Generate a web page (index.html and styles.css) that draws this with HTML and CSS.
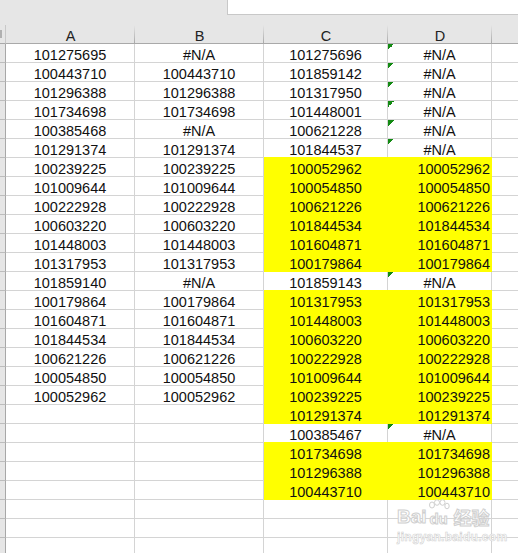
FILE: index.html
```html
<!DOCTYPE html>
<html>
<head>
<meta charset="utf-8">
<link rel="stylesheet" href="styles.css">
</head>
<body>
<div class="topbar"><div class="namebox"></div></div>
<div class="band"></div>
<div class="sheet">
  <div class="row head"><div class="c s"><span class="corner"></span></div><div class="c">A</div><div class="c">B</div><div class="c">C</div><div class="c">D</div><div class="c e"></div></div>
  <div class="row"><div class="c s"></div><div class="c">101275695</div><div class="c">#N/A</div><div class="c">101275696</div><div class="c t">#N/A</div><div class="c e"></div></div>
  <div class="row"><div class="c s"></div><div class="c">100443710</div><div class="c">100443710</div><div class="c">101859142</div><div class="c t">#N/A</div><div class="c e"></div></div>
  <div class="row"><div class="c s"></div><div class="c">101296388</div><div class="c">101296388</div><div class="c">101317950</div><div class="c t">#N/A</div><div class="c e"></div></div>
  <div class="row"><div class="c s"></div><div class="c">101734698</div><div class="c">101734698</div><div class="c">101448001</div><div class="c t">#N/A</div><div class="c e"></div></div>
  <div class="row"><div class="c s"></div><div class="c">100385468</div><div class="c">#N/A</div><div class="c">100621228</div><div class="c t">#N/A</div><div class="c e"></div></div>
  <div class="row"><div class="c s"></div><div class="c">101291374</div><div class="c">101291374</div><div class="c">101844537</div><div class="c t">#N/A</div><div class="c e"></div></div>
  <div class="row"><div class="c s"></div><div class="c">100239225</div><div class="c">100239225</div><div class="c y">100052962</div><div class="c y n">100052962</div><div class="c e"></div></div>
  <div class="row"><div class="c s"></div><div class="c">101009644</div><div class="c">101009644</div><div class="c y">100054850</div><div class="c y n">100054850</div><div class="c e"></div></div>
  <div class="row"><div class="c s"></div><div class="c">100222928</div><div class="c">100222928</div><div class="c y">100621226</div><div class="c y n">100621226</div><div class="c e"></div></div>
  <div class="row"><div class="c s"></div><div class="c">100603220</div><div class="c">100603220</div><div class="c y">101844534</div><div class="c y n">101844534</div><div class="c e"></div></div>
  <div class="row"><div class="c s"></div><div class="c">101448003</div><div class="c">101448003</div><div class="c y">101604871</div><div class="c y n">101604871</div><div class="c e"></div></div>
  <div class="row"><div class="c s"></div><div class="c">101317953</div><div class="c">101317953</div><div class="c y">100179864</div><div class="c y n">100179864</div><div class="c e"></div></div>
  <div class="row"><div class="c s"></div><div class="c">101859140</div><div class="c">#N/A</div><div class="c">101859143</div><div class="c t">#N/A</div><div class="c e"></div></div>
  <div class="row"><div class="c s"></div><div class="c">100179864</div><div class="c">100179864</div><div class="c y">101317953</div><div class="c y n">101317953</div><div class="c e"></div></div>
  <div class="row"><div class="c s"></div><div class="c">101604871</div><div class="c">101604871</div><div class="c y">101448003</div><div class="c y n">101448003</div><div class="c e"></div></div>
  <div class="row"><div class="c s"></div><div class="c">101844534</div><div class="c">101844534</div><div class="c y">100603220</div><div class="c y n">100603220</div><div class="c e"></div></div>
  <div class="row"><div class="c s"></div><div class="c">100621226</div><div class="c">100621226</div><div class="c y">100222928</div><div class="c y n">100222928</div><div class="c e"></div></div>
  <div class="row"><div class="c s"></div><div class="c">100054850</div><div class="c">100054850</div><div class="c y">101009644</div><div class="c y n">101009644</div><div class="c e"></div></div>
  <div class="row"><div class="c s"></div><div class="c">100052962</div><div class="c">100052962</div><div class="c y">100239225</div><div class="c y n">100239225</div><div class="c e"></div></div>
  <div class="row"><div class="c s"></div><div class="c"></div><div class="c"></div><div class="c y">101291374</div><div class="c y n">101291374</div><div class="c e"></div></div>
  <div class="row"><div class="c s"></div><div class="c"></div><div class="c"></div><div class="c">100385467</div><div class="c t">#N/A</div><div class="c e"></div></div>
  <div class="row"><div class="c s"></div><div class="c"></div><div class="c"></div><div class="c y">101734698</div><div class="c y n">101734698</div><div class="c e"></div></div>
  <div class="row"><div class="c s"></div><div class="c"></div><div class="c"></div><div class="c y">101296388</div><div class="c y n">101296388</div><div class="c e"></div></div>
  <div class="row"><div class="c s"></div><div class="c"></div><div class="c"></div><div class="c y">100443710</div><div class="c y n">100443710</div><div class="c e"></div></div>
  <div class="row"><div class="c s"></div><div class="c"></div><div class="c"></div><div class="c"></div><div class="c"></div><div class="c e"></div></div>
  <div class="row"><div class="c s"></div><div class="c"></div><div class="c"></div><div class="c"></div><div class="c"></div><div class="c e"></div></div>
  <div class="row"><div class="c s"></div><div class="c"></div><div class="c"></div><div class="c"></div><div class="c"></div><div class="c e"></div></div>
</div>
<div class="watermark">
  <div class="wm-logo">
    <span>Bai</span>
    <span class="paw">
      <svg width="22" height="12" viewBox="0 0 22 12">
        <g fill="#fff" stroke="#cfcfcf" stroke-width="1">
          <ellipse cx="4" cy="6" rx="2.5" ry="3"/>
          <ellipse cx="9" cy="3.5" rx="2.5" ry="2.8"/>
          <ellipse cx="14.5" cy="3.5" rx="2.5" ry="2.8"/>
          <ellipse cx="19" cy="7" rx="2.2" ry="2.8"/>
        </g>
      </svg>
      <span class="du">du</span>
    </span>
    <span class="jy">经验</span>
  </div>
  <div class="wm-url">jingyan.baidu.com</div>
</div>
</body>
</html>
```
FILE: styles.css
```css
html, body {
  margin: 0;
  padding: 0;
  background: #ffffff;
  overflow: hidden;
}
body {
  width: 518px;
  height: 553px;
  position: relative;
  font-family: "Liberation Sans", Arial, sans-serif;
}
.topbar {
  display: flex;
  height: 15px;
  background: #e6e6e6;
}
.namebox {
  margin-left: 227px;
  flex: 1;
  background: #ffffff;
  border-left: 1px solid #c8c8c8;
  border-bottom: 1px solid #c8c8c8;
}
.band {
  height: 10px;
  background: #e6e6e6;
}
.row {
  display: grid;
  grid-template-columns: 6px 129px 129px 124px 104px 1fr;
  height: 19px;
}
.c {
  box-sizing: border-box;
  height: 19px;
  border-right: 1px solid #d4d4d4;
  border-bottom: 1px solid #d4d4d4;
  font-size: 14.5px;
  line-height: 16px;
  padding-top: 3px;
  text-align: center;
  color: #111111;
  white-space: nowrap;
  overflow: hidden;
}
.c.e {
  border-right: none;
}
.c.s {
  background: #e6e6e6;
  border-right: 1px solid #a8a8a8;
  border-bottom: 1px solid #bdbdbd;
  position: relative;
}
.head .c {
  background: linear-gradient(#e6e6e6, #a9a9a9) right top / 1px 100% no-repeat, #e6e6e6;
  border-right: none;
  border-bottom: 1px solid #a9a9a9;
  padding-top: 2px;
  line-height: 18px;
  color: #222222;
}
.head .c.s {
  background: #e6e6e6;
  border-right: 1px solid #c8c8c8;
}
.head .c.e {
  background: #e6e6e6;
}
.corner {
  position: absolute;
  left: 0;
  top: 5px;
  width: 2px;
  height: 8px;
  background: #b0b0b0;
}
.c.y {
  background: #ffff00;
  border-right-color: #ffff00;
  border-bottom-color: #ffff00;
  box-shadow: 0 -1px 0 #ffff00;
}
.c.n {
  text-align: right;
  padding-right: 1px;
}
.c.t {
  background: linear-gradient(135deg, #138a13 50%, transparent 50%) left top / 6px 6px no-repeat;
}
.watermark {
  position: absolute;
  left: 397px;
  top: 499px;
  width: 100px;
  color: #ffffff;
  pointer-events: none;
}
.wm-logo {
  display: flex;
  align-items: flex-end;
  font-family: "Liberation Sans", Arial, sans-serif;
  font-weight: bold;
  font-size: 19px;
  line-height: 20px;
  -webkit-text-stroke: 1px #cfcfcf;
  height: 28px;
}
.paw {
  display: inline-flex;
  flex-direction: column;
  align-items: center;
  margin: 0 1px;
}
.paw svg {
  display: block;
}
.du {
  font-size: 15px;
  line-height: 16px;
}
.jy {
  font-family: "Noto Sans CJK SC", sans-serif;
  font-size: 18px;
  line-height: 20px;
  margin-left: 3px;
}
.wm-url {
  font-family: "Liberation Sans", Arial, sans-serif;
  font-size: 12px;
  font-weight: bold;
  line-height: 14px;
  margin-top: 3px;
  letter-spacing: 0.3px;
  -webkit-text-stroke: 0.6px #d2d2d2;
}
```
